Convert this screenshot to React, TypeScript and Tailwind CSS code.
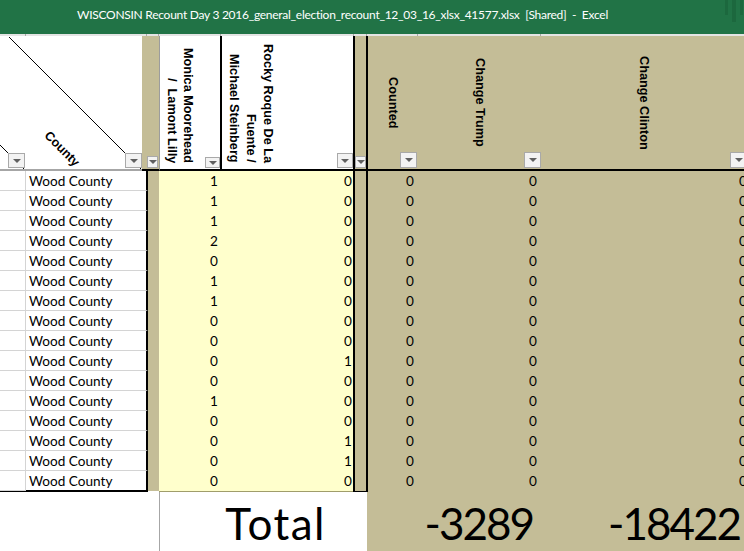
import React from "react";

const rows: [string, string][] = [
  ["1", "0"], ["1", "0"], ["1", "0"], ["2", "0"], ["0", "0"], ["1", "0"], ["1", "0"], ["0", "0"],
  ["0", "0"], ["0", "1"], ["0", "0"], ["1", "0"], ["0", "0"], ["0", "1"], ["0", "1"], ["0", "0"],
];

function DD({ cls }: { cls: string }) {
  return (
    <div className={`absolute flex items-center justify-center border border-[#a9a9a9] bg-[#f3f3f3] ${cls}`}>
      <div className="w-0 h-0 border-l-[4px] border-r-[4px] border-t-[4px] border-l-transparent border-r-transparent border-t-[#606060]" />
    </div>
  );
}

export default function App() {
  return (
    <div className="w-[744px] h-[551px] overflow-hidden bg-white">
      {/* Title bar */}
      <div className="h-[34px] bg-[#217346] flex items-start">
        <div className="pl-[77px] pt-[7px] text-white text-[12px] tracking-[-0.27px] leading-[16px] font-['Lato',sans-serif] whitespace-pre">
          WISCONSIN Recount Day 3 2016_general_election_recount_12_03_16_xlsx_41577.xlsx  [Shared]  -  Excel
        </div>
        <div className="ml-auto flex items-start">
          <div className="w-[3px] h-[15px] bg-[#1c683e]" />
          <div className="w-[4px] h-[22px] bg-[#1c683e] ml-[4px]" />
          <div className="w-[3px] h-[15px] bg-[#1c683e] ml-[4px] mr-[1px]" />
        </div>
      </div>
      {/* band */}
      <div className="h-[2px] flex bg-[#e4e4e4] w-[760px]">
        <div className="w-[26px] border-r border-[#a8a8a8]" />
        <div className="w-[121px] border-r border-[#a8a8a8]" />
        <div className="w-[12px] border-r border-[#a8a8a8]" />
        <div className="w-[62px] border-r border-[#a8a8a8]" />
        <div className="w-[133px] border-r border-[#a8a8a8]" />
        <div className="w-[13px] border-r border-[#a8a8a8]" />
        <div className="w-[51px] border-r border-[#a8a8a8]" />
        <div className="w-[123px] border-r border-[#a8a8a8]" />
      </div>
      {/* Header */}
      <div className="h-[135px] flex w-[760px] font-['Liberation_Sans',Arial,sans-serif] font-bold text-[12.7px] text-black">
        <div className="relative w-[142px] h-full bg-white border-b-2 border-[#a6a6a6]">
          <svg className="absolute left-0 top-0" width="142" height="133" viewBox="0 0 142 133">
            <line x1="9" y1="1" x2="142" y2="134" stroke="#000" strokeWidth="1" />
            <line x1="0" y1="109" x2="25" y2="134" stroke="#000" strokeWidth="1" />
          </svg>
          <span className="absolute left-[39px] top-[105px] w-[46px] text-center leading-[16px] rotate-45">County</span>
          <DD cls="left-[8px] bottom-[1px] w-[17px] h-[15px]" />
          <DD cls="left-[125px] bottom-[1px] w-[17px] h-[15px]" />
        </div>
        <div className="relative w-[17px] h-full bg-[#c4bd97] border-b-2 border-black">
          <DD cls="right-[1px] bottom-[1px] w-[11px] h-[12px]" />
        </div>
        <div className="relative w-[63px] h-full bg-white border-l border-l-[#9c9c9c] border-r-2 border-r-black border-b-2 border-b-black flex justify-end pr-[24px] pb-[6px]">
          <div className="[writing-mode:vertical-rl] text-end leading-[16.5px] whitespace-pre">
            {"Monica Moorehead\n/  Lamont Lilly"}
          </div>
          <DD cls="right-0 bottom-[1px] w-[15px] h-[11px]" />
        </div>
        <div className="relative w-[133px] h-full bg-white border-r-2 border-r-black border-b-2 border-b-black flex justify-end pr-[77px] pb-[6px]">
          <div className="[writing-mode:vertical-rl] text-end leading-[17px] whitespace-pre">
            {"Rocky Roque De La\nFuente /\nMichael Steinberg"}
          </div>
          <DD cls="right-0 bottom-[1px] w-[16px] h-[15px]" />
        </div>
        <div className="relative w-[13px] h-full bg-[#c4bd97] border-r-2 border-r-black border-b-2 border-b-black">
          <DD cls="right-0 bottom-[1px] w-[11px] h-[12px]" />
        </div>
        <div className="relative w-[50px] h-full bg-[#c4bd97] border-b-2 border-black flex items-center justify-center">
          <div className="[writing-mode:vertical-rl] leading-[16px]">Counted</div>
          <DD cls="right-[1px] bottom-[1px] w-[17px] h-[16px]" />
        </div>
        <div className="relative w-[123px] h-full bg-[#c4bd97] border-b-2 border-black flex items-center justify-center">
          <div className="[writing-mode:vertical-rl] leading-[16px]">Change Trump</div>
          <DD cls="right-0 bottom-[1px] w-[17px] h-[16px]" />
        </div>
        <div className="relative w-[210px] h-full bg-[#c4bd97] border-b-2 border-black flex items-center justify-center pr-[4px]">
          <div className="[writing-mode:vertical-rl] leading-[16px]">Change Clinton</div>
          <DD cls="right-[4px] bottom-[1px] w-[17px] h-[16px]" />
        </div>
      </div>
      {/* Data rows */}
      <div className="font-['Lato',sans-serif] text-[13.6px] text-black">
        {rows.map((r, i) => (
          <div key={i} className="h-[20px] flex w-[760px]">
            <div className="w-[26px] h-full bg-white border-r border-b border-[#d4d4d4]" />
            <div className={`w-[122px] h-full bg-white border-r-2 border-r-black border-b pl-[3px] pt-[1px] leading-[19px] whitespace-nowrap ${i === 15 ? "border-b-black" : "border-b-[#d4d4d4]"}`}>
              Wood County
            </div>
            <div className="w-[11px] h-full bg-[#c4bd97]" />
            <div className="w-[63px] h-full bg-[#ffffcc] text-right pr-[4px] pt-[1px] leading-[19px]">{r[0]}</div>
            <div className="w-[133px] h-full bg-[#ffffcc] border-r-2 border-black text-right pr-[1px] pt-[1px] leading-[19px]">{r[1]}</div>
            <div className="w-[13px] h-full bg-[#c4bd97] border-r-2 border-black" />
            <div className="w-[50px] h-full bg-[#c4bd97] text-right pr-[4px] pt-[1px] leading-[19px]">0</div>
            <div className="w-[123px] h-full bg-[#c4bd97] text-right pr-[4px] pt-[1px] leading-[19px]">0</div>
            <div className="w-[210px] h-full bg-[#c4bd97] text-right pr-[4px] pt-[1px] leading-[19px]">0</div>
          </div>
        ))}
      </div>
      {/* bottom border strip */}
      <div className="h-[1px] flex w-[760px]">
        <div className="w-[148px] bg-black" />
        <div className="w-[11px] bg-white" />
        <div className="w-[194px] bg-[#a09d6b]" />
        <div className="w-[15px] bg-black" />
        <div className="flex-1 bg-[#c4bd97]" />
      </div>
      {/* Total row */}
      <div className="h-[59px] flex w-[760px] font-['Lato',sans-serif] text-[44px] text-black">
        <div className="w-[159px] h-full bg-white" />
        <div className="w-[208px] h-full bg-white border-l border-[#a6a6a6] flex items-center justify-end pr-[41px] pt-[3px] tracking-[1.5px]">Total</div>
        <div className="w-[174px] h-full bg-[#c4bd97] flex items-center justify-end pr-[8px] pt-[3px] tracking-[-2px]">-3289</div>
        <div className="w-[210px] h-full bg-[#c4bd97] flex items-center justify-end pr-[11px] pt-[3px] tracking-[-2px]">-18422</div>
      </div>
    </div>
  );
}
